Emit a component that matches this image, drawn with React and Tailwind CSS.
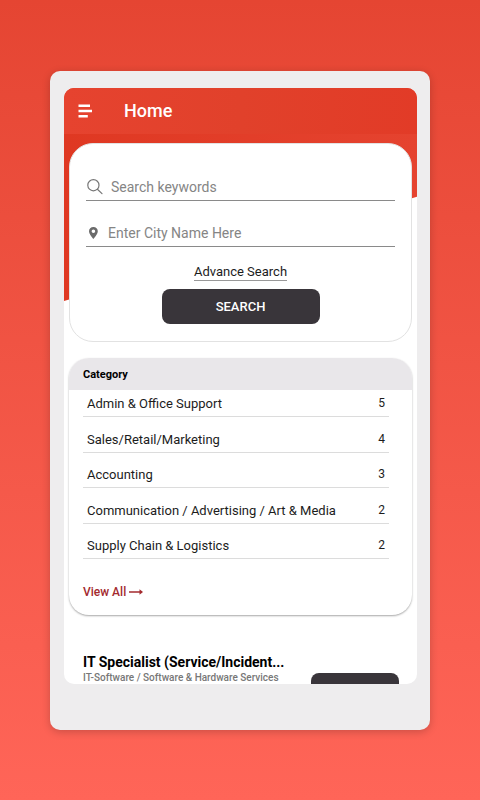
import { useState } from "react"

const categories = [
  { name: "Admin & Office Support", count: 5 },
  { name: "Sales/Retail/Marketing", count: 4 },
  { name: "Accounting", count: 3 },
  { name: "Communication / Advertising / Art & Media", count: 2 },
  { name: "Supply Chain & Logistics", count: 2 },
]

function SearchIcon() {
  return (
    <svg className="h-4 w-4 shrink-0" viewBox="0 0 16 16" fill="none" stroke="#777" strokeWidth="1.2" strokeLinecap="round">
      <circle cx="6.4" cy="6.2" r="5.6" />
      <path d="M10.4 10.3L15 14.6" />
    </svg>
  )
}

function PinIcon() {
  return (
    <svg className="h-3 w-3 shrink-0" viewBox="0 0 12 12" fill="#6b6b6b" fillRule="evenodd">
      <path d="M5.4 0C2.8 0 1 1.9 1 4.3C1 7.4 5.4 12 5.4 12S9.8 7.4 9.8 4.3C9.8 1.9 8 0 5.4 0ZM5.4 2.5A1.8 1.8 0 1 1 5.4 6.1A1.8 1.8 0 0 1 5.4 2.5Z" />
    </svg>
  )
}

function Header() {
  return (
    <header className="relative flex h-[46px] shrink-0 items-center bg-linear-to-r from-[#e6432f] via-[#e1412b] to-[#e23b27] pl-[14px]">
      <button type="button" aria-label="Open menu" className="mr-8 text-white">
        <svg className="h-[14px] w-[14px]" viewBox="0 0 14 14" fill="none" stroke="currentColor" strokeWidth="2.4">
          <path d="M0.5 1.8H12M0.5 7H14M0.5 12.2H9.8" />
        </svg>
      </button>
      <h1 className="text-lg font-medium text-white">Home</h1>
    </header>
  )
}

function SearchCard() {
  const [keywords, setKeywords] = useState("")
  const [city, setCity] = useState("")

  return (
    <form
      className="relative mt-[9px] flex h-[199px] flex-col items-center rounded-[24px] border border-[#e2e2e2] bg-white px-4 pt-[31px]"
      onSubmit={(e) => e.preventDefault()}
    >
      <label className="flex h-[26px] w-full items-center gap-2 border-b border-[#8a8a8a] pb-px pl-px">
        <SearchIcon />
        <input
          type="text"
          aria-label="Search keywords"
          placeholder="Search keywords"
          value={keywords}
          onChange={(e) => setKeywords(e.target.value)}
          className="min-w-0 flex-1 text-[14px] leading-5 text-[#333] outline-none placeholder:text-[#858585]"
        />
      </label>
      <label className="mt-5 flex h-[26px] w-full items-center gap-2 border-b border-[#8a8a8a] pb-px pl-[2px]">
        <PinIcon />
        <input
          type="text"
          aria-label="Enter City Name Here"
          placeholder="Enter City Name Here"
          value={city}
          onChange={(e) => setCity(e.target.value)}
          className="min-w-0 flex-1 text-[14px] leading-5 text-[#333] outline-none placeholder:text-[#858585]"
        />
      </label>
      <a href="#advance" className="mt-4 border-b border-[#999] text-[13px] leading-[17px] text-[#1c1c1c]">
        Advance Search
      </a>
      <button type="submit" className="mt-2 h-[35px] w-[158px] rounded-lg bg-[#39353a] text-[13px] font-medium text-white">
        SEARCH
      </button>
    </form>
  )
}

function CategoryCard() {
  return (
    <section className="mt-4 flex h-[257px] shrink-0 flex-col overflow-hidden rounded-[20px] bg-white shadow-[0_1px_2px_rgba(0,0,0,0.35)]">
      <h2 className="h-8 shrink-0 bg-[#e9e7ea] pl-[14px] text-[11px] leading-[34px] font-bold text-black">Category</h2>
      <ul className="mr-[23px] ml-[14px] flex h-[169px] flex-col text-[13px] leading-4 text-[#1c1c1c]">
        {categories.map((category) => (
          <li
            key={category.name}
            className="flex flex-1 items-end justify-between border-b border-[#dcdcdc] pr-1 pb-1 pl-1 first:h-[27px] first:flex-none"
          >
            <span>{category.name}</span>
            <span className="pb-px text-[12px]">{category.count}</span>
          </li>
        ))}
      </ul>
      <a href="#categories" className="mt-[25px] ml-[14px] flex items-center gap-[3px] self-start text-[12px] leading-4 font-medium text-[#a32a2e]">
        View All
        <svg className="h-[7px] w-[14px]" viewBox="0 0 14 7" fill="none" stroke="currentColor" strokeWidth="1.4">
          <path d="M0 3H12" />
          <path d="M10.5 0.2L14 3L10.5 5.8Z" fill="currentColor" stroke="none" />
        </svg>
      </a>
    </section>
  )
}

function JobItem() {
  return (
    <article className="mt-[38px] flex shrink-0 items-start justify-between pr-[13px] pl-[14px]">
      <div className="min-w-0">
        <h3 className="text-[14px] leading-[18px] font-bold whitespace-nowrap text-black">IT Specialist (Service/Incident...</h3>
        <p className="text-[10px] leading-[14px] font-medium whitespace-nowrap text-[#777]">IT-Software / Software & Hardware Services</p>
      </div>
      <button type="button" aria-label="Apply" className="mt-5 h-[35px] w-[88px] shrink-0 rounded-lg bg-[#39353a]" />
    </article>
  )
}

export default function App() {
  return (
    <div className="min-h-screen bg-linear-to-b from-[#e54532] to-[#ff6558] px-[50px] pt-[71px] pb-[70px] font-['Roboto',sans-serif]">
      <div className="rounded-[10px] bg-[#eeedee] pt-[17px] pr-[13px] pb-[46px] pl-[14px] shadow-[0_2px_8px_rgba(0,0,0,0.2)]">
        <main className="relative flex h-[596px] flex-col overflow-hidden rounded-[10px] bg-white">
          {/* slanted banner behind the search card */}
          <div className="absolute inset-x-0 top-0 h-[213px] bg-linear-to-r from-[#df3822] to-[#e5432f] [clip-path:polygon(0_0,100%_0,100%_51%,0_100%)]" />
          <Header />
          <div className="flex flex-col px-[5px]">
            <SearchCard />
            <CategoryCard />
            <JobItem />
          </div>
        </main>
      </div>
    </div>
  )
}
